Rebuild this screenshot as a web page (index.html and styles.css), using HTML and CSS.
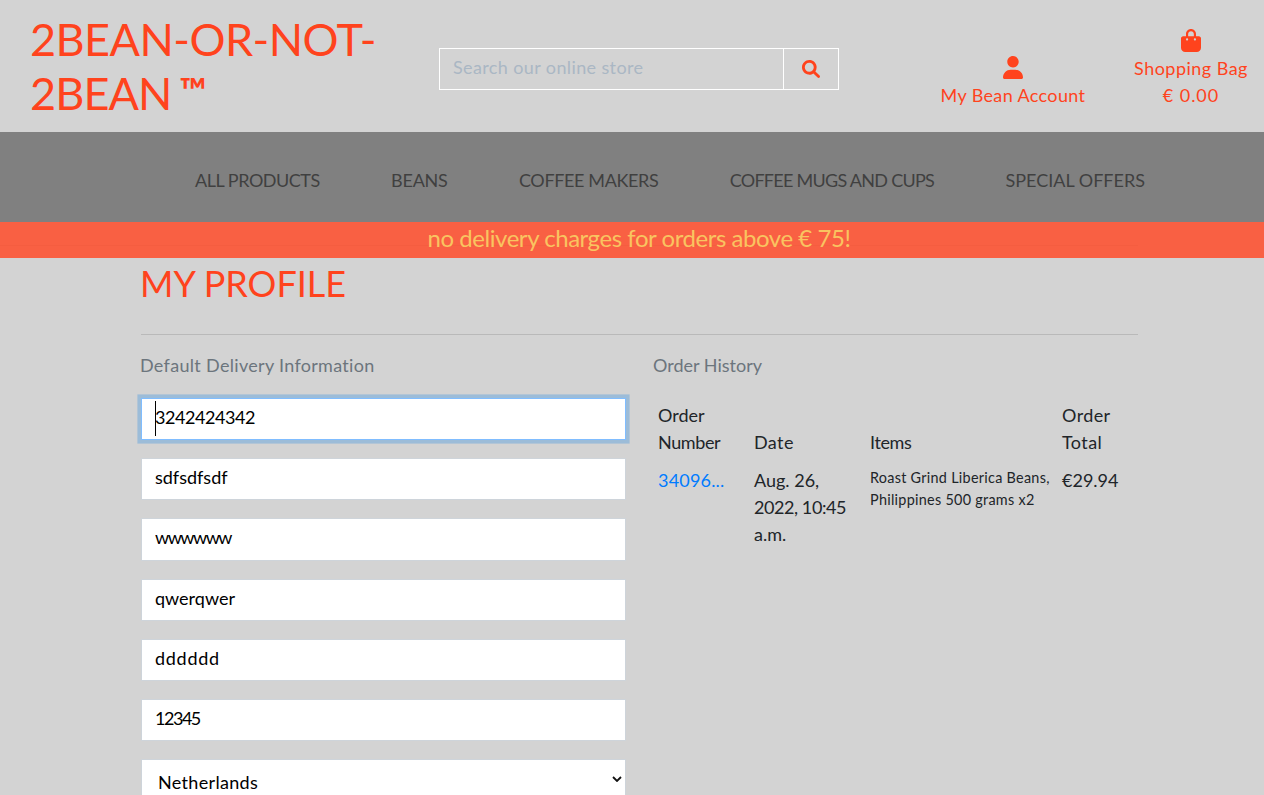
FILE: index.html
```html
<!DOCTYPE html>
<html lang="en">
<head>
<meta charset="utf-8">
<title>2BEAN-OR-NOT-2BEAN</title>
<link rel="stylesheet" href="styles.css">
</head>
<body>
<header class="top">
  <a class="logo"><span class="logo-first">2BEAN-OR-NOT-</span><br><span class="logo-second">2BEAN</span><span class="tm">™</span></a>
  <form class="search">
    <input class="search-input" type="text" placeholder="Search our online store">
    <button class="search-btn" type="button" aria-label="Search">
      <svg width="18" height="18" viewBox="0 0 512 512"><path fill="currentColor" d="M500.3 443.7l-119.7-119.7c27.22-40.41 40.65-90.9 33.46-144.7C401.8 87.79 326.8 13.32 235.2 1.723C99.01-15.51-15.51 99.01 1.724 235.2c11.6 91.64 86.08 166.7 177.6 178.9c53.8 7.189 104.3-6.236 144.7-33.46l119.7 119.7c15.62 15.62 40.95 15.62 56.57 0C515.9 484.7 515.9 459.3 500.3 443.7zM79.1 208c0-70.58 57.42-128 128-128s128 57.42 128 128c0 70.58-57.42 128-128 128S79.1 278.6 79.1 208z"/></svg>
    </button>
  </form>
  <a class="tool account">
    <svg class="tool-icon" width="20" height="23" viewBox="0 0 448 512"><path fill="currentColor" d="M224 256c70.7 0 128-57.31 128-128s-57.3-128-128-128C153.3 0 96 57.31 96 128S153.3 256 224 256zM274.7 304H173.3C77.61 304 0 381.6 0 477.3c0 19.14 15.52 34.67 34.66 34.67h378.7C432.5 512 448 496.5 448 477.3C448 381.6 370.4 304 274.7 304z"/></svg>
    <span class="account-text">My Bean Account</span>
  </a>
  <a class="tool bag">
    <svg class="tool-icon" width="20" height="23" viewBox="0 0 448 512"><path fill="currentColor" d="M112 112C112 50.14 162.1 0 224 0C285.9 0 336 50.14 336 112V160H400C426.5 160 448 181.5 448 208V416C448 469 405 512 352 512H96C42.98 512 0 469 0 416V208C0 181.5 21.49 160 48 160H112V112zM160 160H288V112C288 76.65 259.3 48 224 48C188.7 48 160 76.65 160 112V160zM136 256C149.3 256 160 245.3 160 232C160 218.7 149.3 208 136 208C122.7 208 112 218.7 112 232C112 245.3 122.7 256 136 256zM312 208C298.7 208 288 218.7 288 232C288 245.3 298.7 256 312 256C325.3 256 336 245.3 336 232C336 218.7 325.3 208 312 208z"/></svg>
    <span class="bag-text">Shopping Bag</span>
    <span class="bag-total">€ 0.00</span>
  </a>
</header>
<nav class="nav">
  <a class="nav-products">ALL PRODUCTS</a>
  <a class="nav-beans">BEANS</a>
  <a class="nav-makers">COFFEE MAKERS</a>
  <a class="nav-mugs">COFFEE MUGS AND CUPS</a>
  <a class="nav-offers">SPECIAL OFFERS</a>
</nav>
<div class="banner"><span class="banner-text">no delivery charges for orders above € 75!</span></div>
<main class="page">
  <h2 class="title">MY PROFILE</h2>
  <hr class="rule">
  <div class="columns">
    <section class="delivery">
      <p class="muted delivery-head">Default Delivery Information</p>
      <form class="fields">
        <div class="field-wrap"><input class="field focused digits" type="text" value="3242424342"><span class="caret"></span></div>
        <input class="field" type="text" value="sdfsdfsdf">
        <input class="field tight" type="text" value="wwwwww">
        <input class="field" type="text" value="qwerqwer">
        <input class="field loose" type="text" value="dddddd">
        <input class="field tight" type="text" value="12345">
        <div class="field select"><span>Netherlands</span>
          <svg class="chevron" width="10" height="6" viewBox="0 0 10 6"><path d="M1 1l4 4 4-4" fill="none" stroke="#111" stroke-width="1.8"/></svg>
        </div>
      </form>
    </section>
    <section class="history">
      <p class="muted">Order History</p>
      <table class="orders">
        <thead>
          <tr><th class="c-number">Order<br><span class="number">Number</span></th><th class="c-date wide">Date</th><th class="c-items number">Items</th><th class="c-total wide">Order<br>Total</th></tr>
        </thead>
        <tbody>
          <tr><td><a class="link">34096...</a></td><td>Aug. 26,<br><span class="time">2022, 10:45</span><br>a.m.</td><td class="item">Roast Grind Liberica Beans,<br>Philippines 500 grams x2</td><td>€29.94</td></tr>
        </tbody>
      </table>
    </section>
  </div>
</main>
</body>
</html>
```
FILE: styles.css
```css
* { box-sizing: border-box; }
html { overflow: hidden; }
body {
  margin: 0;
  height: 795px;
  overflow: hidden;
  background: #d3d3d3;
  color: #212529;
  font: 18px/27px Lato, "Open Sans", sans-serif;
}

/* Header */
.top {
  display: grid;
  grid-template-columns: 409px 400px 1fr 146px 47px 116px 15px;
  height: 132px;
  padding-left: 30px;
  color: #ff431d;
}
.logo { padding-top: 12px; font-size: 45px; line-height: 54px; white-space: nowrap; }
.logo-first { letter-spacing: -.55px; }
.logo-second { letter-spacing: -.9px; }
.tm { margin-left: 8px; font-size: 36px; font-weight: 700; vertical-align: 6px; line-height: 0; }
.search { display: flex; height: 42px; margin-top: 48px; border: 1px solid #fff; }
.search-input {
  flex: 1;
  min-width: 0;
  padding: 0 13px 4px;
  border: 0;
  background: none;
  font: inherit;
  letter-spacing: .38px;
}
.search-input::placeholder { color: #aab7c4; opacity: 1; }
.search-btn {
  display: grid;
  place-items: center;
  width: 55px;
  padding: 0;
  border: 0;
  border-left: 1px solid #fff;
  background: none;
  color: inherit;
}
.tool { display: flex; flex-direction: column; align-items: center; white-space: nowrap; }
.tool-icon { margin-bottom: 3px; flex: none; }
.account { grid-column: 4; padding-top: 56px; }
.bag { grid-column: 6; padding-top: 29px; }
.account-text { letter-spacing: .36px; }
.bag-text { letter-spacing: .47px; }
.bag-total { letter-spacing: .96px; }

/* Navigation */
.nav {
  display: flex;
  justify-content: space-between;
  height: 90px;
  padding: 35px 119px 0 195px;
  background: #808080;
  color: #404040;
  white-space: nowrap;
}
.nav-products { letter-spacing: -.47px; }
.nav-beans { letter-spacing: -.24px; }
.nav-makers { letter-spacing: -.37px; }
.nav-mugs { letter-spacing: -.72px; }

.banner {
  height: 36px;
  padding-left: 14px;
  background: linear-gradient(#f55d40, #f55d40) 0 23px / 1138px 1px no-repeat #f96043;
  color: #f9c460;
  font-size: 24px;
  line-height: 32px;
  text-align: center;
}
.banner-text { letter-spacing: -.45px; }

/* Profile */
.page { width: 997px; margin-left: 141px; }
.title {
  margin: 0 0 0 -1px;
  height: 76px;
  padding-top: 4px;
  color: #ff431d;
  font-size: 36px;
  font-weight: 400;
  line-height: 43px;
}
.rule { height: 1px; margin: 0 0 17px; border: 0; background: #b9b9b9; }
.columns { display: grid; grid-template-columns: 485px 485px; gap: 27px; }
.muted { margin: 0 0 18px; color: #6c757d; }
.delivery-head { margin-left: -1px; letter-spacing: .31px; }
.fields { display: flex; flex-direction: column; gap: 18px; padding-top: 1px; }
.field-wrap { position: relative; display: flex; }
.field {
  width: 100%;
  height: 42.2px;
  padding: 0 13px 4px;
  border: 1px solid #ced4da;
  background: #fff;
  color: #000;
  font: inherit;
}
.focused { border-color: #80bdff; box-shadow: 0 0 0 3.6px rgba(75, 156, 225, .4); outline: 0; }
.caret { position: absolute; left: 14px; top: 3px; width: 1px; height: 35px; background: #000; }
.digits { letter-spacing: -.44px; }
.tight { letter-spacing: -1.48px; }
.loose { letter-spacing: .72px; }
.select {
  display: flex;
  flex: none;
  justify-content: space-between;
  height: 48px;
  padding: 9px 3px 0 16px;
  letter-spacing: .32px;
}
.chevron { margin-top: 7px; }

.orders { width: 485px; table-layout: fixed; border-collapse: collapse; white-space: nowrap; }
.orders th, .orders td { padding: 5.4px 0 5.4px 5px; text-align: left; font-weight: 400; }
.orders th { vertical-align: bottom; }
.orders td { vertical-align: top; }
.c-number { width: 96px; }
.c-date { width: 116px; }
.c-items { width: 192px; }
.number { letter-spacing: -.4px; }
.wide { letter-spacing: .4px; }
.time { letter-spacing: -.43px; }
.link { color: #007bff; letter-spacing: .19px; }
.orders .item { font-size: 14.4px; line-height: 21.6px; letter-spacing: .28px; }
```
